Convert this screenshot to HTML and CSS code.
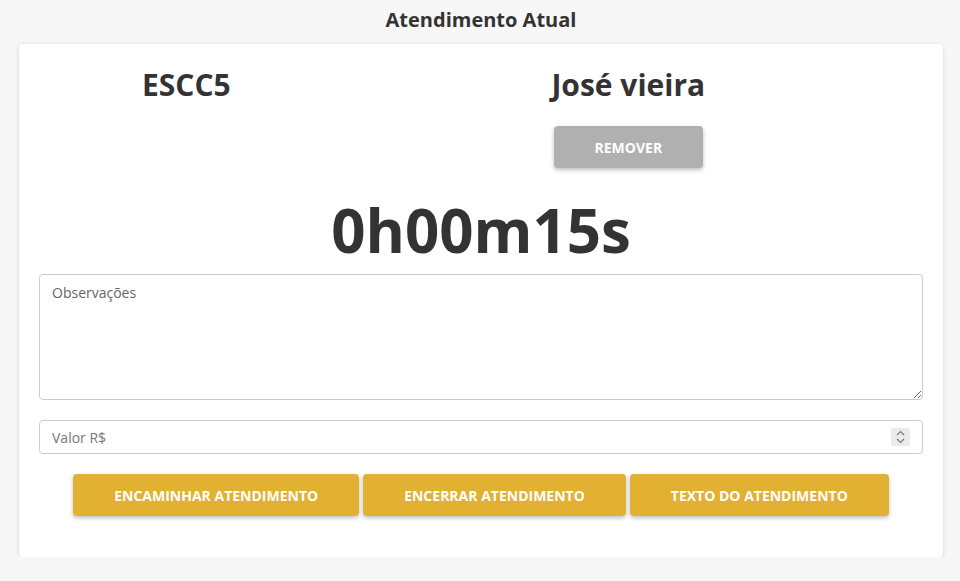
FILE: index.html
```html
<!DOCTYPE html>
<html lang="pt">
<head>
<meta charset="utf-8">
<title>Atendimento Atual</title>
<link rel="stylesheet" href="styles.css">
</head>
<body>
<h1 class="page-title">Atendimento Atual</h1>
<main class="card">
  <div class="top-row">
    <div class="col-left">
      <h2 class="big-name">ESCC5</h2>
    </div>
    <div class="col-right">
      <h2 class="big-name">José vieira</h2>
      <button class="btn btn-gray" type="button">REMOVER</button>
    </div>
  </div>
  <div class="timer">0h00m15s</div>
  <textarea class="field textarea" placeholder="Observações"></textarea>
  <div class="number-wrap">
    <input class="field number" type="number" placeholder="Valor R$">
    <span class="spinner" aria-hidden="true">
      <svg width="9" height="14" viewBox="0 0 9 14"><path d="M1 5 L4.5 1.5 L8 5 M1 9 L4.5 12.5 L8 9" fill="none" stroke="#777" stroke-width="1.1"/></svg>
    </span>
  </div>
  <div class="actions">
    <button class="btn btn-yellow" type="button">ENCAMINHAR ATENDIMENTO</button>
    <button class="btn btn-yellow" type="button">ENCERRAR ATENDIMENTO</button>
    <button class="btn btn-yellow" type="button">TEXTO DO ATENDIMENTO</button>
  </div>
</main>
</body>
</html>
```

FILE: styles.css
```css
* { box-sizing: border-box; }
html, body { margin: 0; padding: 0; }
body {
  background: #f7f7f7;
  font-family: "Open Sans", "Liberation Sans", sans-serif;
  color: #333;
  padding: 0 17px 0 19px;
}
.page-title {
  margin: 0;
  height: 44px;
  padding-top: 6px;
  font-size: 20px;
  line-height: 28px;
  font-weight: 700;
  text-align: center;
  color: #333;
}
.card {
  background: #fff;
  border-radius: 4px;
  box-shadow: 0 1px 4px rgba(0,0,0,0.15);
  padding: 20px 20px 41px;
}
.top-row {
  display: grid;
  grid-template-columns: 1fr 2fr;
}
.col-left, .col-right {
  display: flex;
  flex-direction: column;
  align-items: center;
}
.big-name {
  margin: 0;
  font-size: 30px;
  line-height: 42px;
  font-weight: 700;
  color: #333;
}
.btn {
  font-family: "Open Sans", "Liberation Sans", sans-serif;
  font-weight: 700;
  font-size: 14px;
  color: #fff;
  border: none;
  border-radius: 4px;
  height: 42px;
  box-shadow: 0 2px 4px rgba(0,0,0,0.25);
  cursor: pointer;
}
.btn-gray {
  background: #b0b0b0;
  width: 149px;
  margin-top: 20px;
}
.timer {
  text-align: center;
  font-size: 60px;
  font-weight: 700;
  line-height: 64px;
  margin-top: 30px;
  margin-bottom: 12px;
  color: #333;
}
.field {
  display: block;
  width: 100%;
  border: 1px solid #ccc;
  border-radius: 4px;
  font-family: "Open Sans", "Liberation Sans", sans-serif;
  font-size: 14px;
  color: #555;
  background: #fff;
}
.field::placeholder { color: #666; }
.textarea {
  height: 126px;
  padding: 8px 12px;
  resize: vertical;
}
.number-wrap {
  position: relative;
  margin-top: 20px;
}
.number {
  height: 34px;
  padding: 6px 12px;
  -moz-appearance: textfield;
}
.number::-webkit-inner-spin-button,
.number::-webkit-outer-spin-button {
  -webkit-appearance: none;
  margin: 0;
}
.number::placeholder { color: #777; }
.spinner {
  position: absolute;
  right: 13px;
  top: 8px;
  width: 19px;
  height: 18px;
  background: #ebebeb;
  border-radius: 2px;
  display: flex;
  align-items: center;
  justify-content: center;
  pointer-events: none;
}
.actions {
  margin-top: 20px;
  display: flex;
  justify-content: center;
  gap: 4px;
}
.btn-yellow {
  background: #e2b132;
  padding: 0 41px;
}
```
